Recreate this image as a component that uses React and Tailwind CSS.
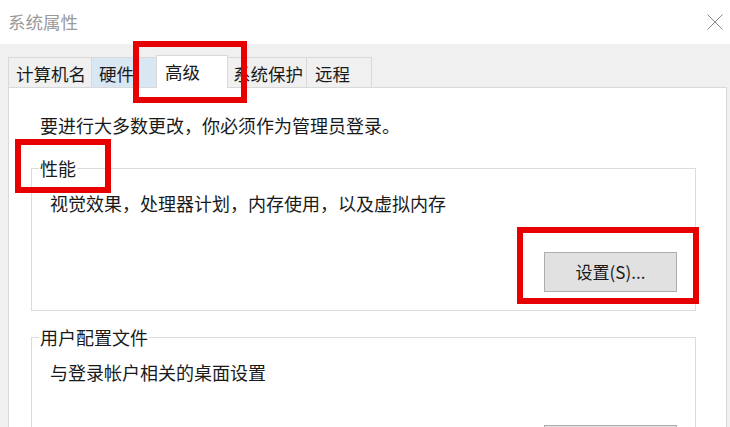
import React from "react";

const font = { fontFamily: '"Noto Sans CJK SC", "Noto Sans", sans-serif' };

function Tab({ label, className = "" }) {
  return (
    <div
      className={
        "h-[30px] border border-b-0 border-[#d9d9d9] pl-[7px] leading-[29px] pt-[1px] text-[17.5px] text-[#1a1a1a] whitespace-nowrap " +
        className
      }
    >
      {label}
    </div>
  );
}

function GroupBox({ title, desc, className = "", gap }) {
  return (
    <fieldset
      className={
        "w-[665px] border border-[#dcdcdc] pl-[18px] pr-[18px] pt-[11px] pb-[18px] " +
        className
      }
    >
      <legend className="ml-[-11px] px-[1px] text-[18px] leading-[24px] text-[#1a1a1a]">
        {title}
      </legend>
      <div className="text-[18px] leading-[24px] text-[#1a1a1a]">{desc}</div>
      <div className={"flex justify-end " + gap}>
        <button className="h-[40px] w-[133px] border border-[#adadad] bg-[#e1e1e1] text-[17px] text-[#1a1a1a]">
          设置(S)...
        </button>
      </div>
    </fieldset>
  );
}

export default function App() {
  return (
    <div
      className="relative h-[427px] w-[730px] overflow-hidden bg-[#f0f0f0]"
      style={font}
    >
      {/* title bar */}
      <div className="flex h-[44px] items-center justify-between bg-white pl-[8px] pr-[7px]">
        <span className="text-[17.5px] leading-[44px] text-[#9a9a9a]">系统属性</span>
        <svg width="16" height="16" viewBox="0 0 16 16" className="mb-[1px]">
          <path d="M0.5 0.5 L15.5 15.5 M15.5 0.5 L0.5 15.5" stroke="#8a8a8a" strokeWidth="1" />
        </svg>
      </div>

      {/* tabs */}
      <div className="flex items-end pl-[8px] pt-[11px]">
        <Tab label="计算机名" className="w-[84px] bg-[#f0f0f0]" />
        <Tab label="硬件" className="w-[66px] border-l-0 bg-[#d9e6f3]" />
        <div className="relative z-10 mx-[-2px] mb-[-1px] h-[33px] w-[72px] border border-b-0 border-[#d9d9d9] bg-white pl-[8px] pt-[2px] text-[17.5px] leading-[28px] text-[#1a1a1a]">
          高级
        </div>
        <Tab label="系统保护" className="w-[81px] border-l-0 pl-[5px]" />
        <Tab label="远程" className="w-[65px] border-l-0 pl-[8px]" />
      </div>

      {/* panel */}
      <div className="ml-[8px] h-[400px] w-[719px] border border-[#d9d9d9] bg-white px-[22px] pt-[25px]">
        <div className="ml-[9px] text-[18px] leading-[24px] text-[#1a1a1a]">
          要进行大多数更改，你必须作为管理员登录。
        </div>
        <GroupBox
          title="性能"
          desc="视觉效果，处理器计划，内存使用，以及虚拟内存"
          className="mt-[19px]"
          gap="mt-[37px]"
        />
        <GroupBox
          title="用户配置文件"
          desc="与登录帐户相关的桌面设置"
          className="mt-[14px]"
          gap="mt-[41px]"
        />
      </div>

      {/* red highlight boxes */}
      <div className="pointer-events-none absolute left-[133px] top-[41px] h-[62px] w-[114px] border-[6px] border-[#e60000]" />
      <div className="pointer-events-none absolute left-[15px] top-[139px] h-[54px] w-[96px] border-[6px] border-[#e60000]" />
      <div className="pointer-events-none absolute left-[517px] top-[227px] h-[77px] w-[182px] border-[6px] border-[#e60000]" />
    </div>
  );
}
